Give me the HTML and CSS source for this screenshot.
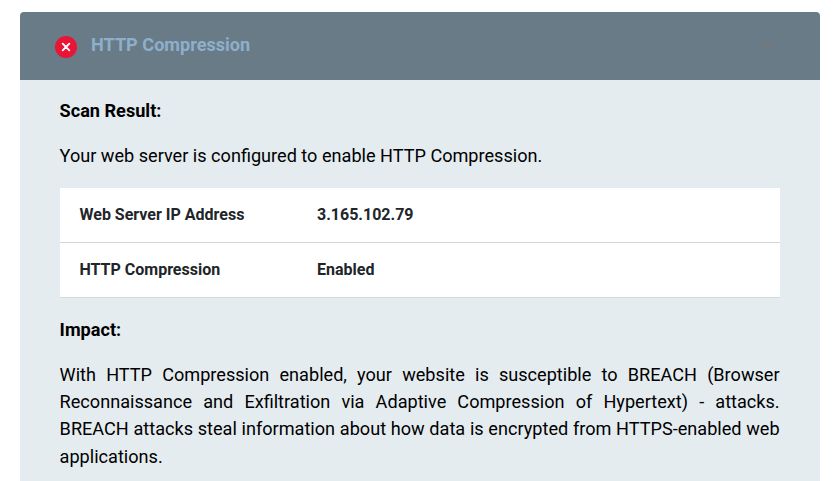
FILE: index.html
```
<!DOCTYPE html>
<html lang="en">
<head>
<meta charset="utf-8" />
<title>HTTP Compression</title>
<link rel="stylesheet" href="styles.css">
</head>
<body>
<div class="panel">
    <div class="panel-heading">
        <svg class="icon-fail" viewBox="0 0 22 22"><circle cx="11" cy="11" r="11" fill="#e91536"/><path d="M7.7 7.7l6.6 6.6M14.3 7.7l-6.6 6.6" stroke="#fff" stroke-width="1.9" stroke-linecap="round"/></svg>
        <h4>HTTP Compression</h4>
        <svg class="icon-toggle" viewBox="0 0 18 10"><path d="M1.5 8.5L9 1.5l7.5 7" fill="none" stroke="#77777a" stroke-width="2"/></svg>
    </div>
    <div class="panel-body">
        <h5>Scan Result:</h5>
        <p>Your web server is configured to enable HTTP Compression.</p>
        <table class="result">
            <tr><th>Web Server IP Address</th><td>3.165.102.79</td></tr>
            <tr><th>HTTP Compression</th><td>Enabled</td></tr>
        </table>
        <h5>Impact:</h5>
        <p>With HTTP Compression enabled, your website is susceptible to BREACH (Browser Reconnaissance and Exfiltration via Adaptive Compression of Hypertext) - attacks. BREACH attacks steal information about how data is encrypted from HTTPS-enabled web applications.</p>
    </div>
</div>
</body>
</html>
```
FILE: styles.css
```
html,body{overflow:hidden;}
body,h4,h5,p{margin:0;padding:0;}
body{background:#fff;color:#000;font:18.12px/27.2px Roboto,"Liberation Sans",sans-serif;}
.panel{width:800px;margin:12px 0 0 20px;}
.panel-heading{display:flex;align-items:center;height:68px;padding:2px 44px 0 35px;box-sizing:border-box;background:#687b87;border-radius:4px 4px 0 0;}
.icon-fail{width:22px;height:22px;margin-right:14px;}
.icon-toggle{width:18px;height:10px;margin-left:auto;}
.panel-heading h4{padding-bottom:5px;color:#8eafcb;font-size:18.12px;font-weight:700;}
.panel-body{height:420px;padding:17px 40.4px 0 39.6px;box-sizing:border-box;background:#e5ecf0;}
.panel-body h5{margin-bottom:17.7px;font-size:18.12px;font-weight:700;}
.panel-body p{text-align:justify;}
.result{width:720px;margin:18.9px 0 18.1px .4px;border-collapse:separate;border-spacing:0;table-layout:fixed;background:#fff;color:#212529;font-size:16px;line-height:24px;}
.result th,.result td{height:55px;padding:0 20px;border-bottom:1px solid #d6d9dc;box-sizing:border-box;text-align:left;font-weight:700;}
.result th{width:237px;padding-left:19.5px;}
```
